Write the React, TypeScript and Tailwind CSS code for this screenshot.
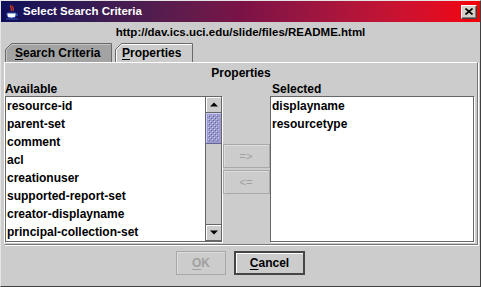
import React from "react";

const available = [
  "resource-id",
  "parent-set",
  "comment",
  "acl",
  "creationuser",
  "supported-report-set",
  "creator-displayname",
  "principal-collection-set",
];

const selected = ["displayname", "resourcetype"];

function JavaIcon() {
  return (
    <svg width="16" height="16" viewBox="0 0 16 16">
      <path d="M7 1c-2 2 2 3 0 6M9 2c-1.5 1.5 1.5 2.5 0 5" fill="none" stroke="#e04020" strokeWidth="1.2" />
      <path d="M3 9h9v2c0 2-2 3-4.5 3S3 13 3 11z" fill="#ffffff" stroke="#3050b0" strokeWidth="1" />
      <path d="M12 10h1.5v1.5H12" fill="none" stroke="#3050b0" strokeWidth="1" />
      <path d="M2 15h12" stroke="#3050b0" strokeWidth="1" />
    </svg>
  );
}

function CloseButton() {
  return (
    <div className="w-[16px] h-[14px] bg-[#d4d0c8] border-t border-l border-white border-r border-b border-r-[#404040] border-b-[#404040] shadow-[inset_-1px_-1px_0_#808080] flex items-center justify-center">
      <svg width="8" height="7" viewBox="0 0 8 7">
        <path d="M0.5 0.5l7 6M7.5 0.5l-7 6" stroke="#000" strokeWidth="1.6" />
      </svg>
    </div>
  );
}

function Tab({ label, selected: sel, width }: { label: string; selected?: boolean; width: number }) {
  return (
    <div className="relative h-[19px] flex items-center" style={{ width }}>
      <svg className="absolute inset-0" width={width} height="19">
        <path
          d={`M0.5 19 V6.5 L6.5 0.5 H${width - 1.5} V19`}
          fill={sel ? "#cccccc" : "#a3a3a3"}
          stroke="#6a6a6a"
          strokeWidth="1"
        />
        <path d={`M1.5 19 V6.9 L6.9 1.5 H${width - 2.5}`} fill="none" stroke={sel ? "#ffffff" : "#c4c4c4"} strokeWidth="1" />
      </svg>
      <span className={`relative text-[12px] font-bold text-black ${sel ? "pl-[7px]" : "pl-[10px]"}`}>
        <span className="underline underline-offset-2">{label[0]}</span>
        {label.slice(1)}
      </span>
    </div>
  );
}

function Arrow({ up }: { up?: boolean }) {
  return (
    <div className="w-[15px] h-[16px] bg-[#cccccc] border-b border-[#666666] shadow-[inset_1px_1px_0_#ffffff] flex items-center justify-center">
      <svg width="8" height="5" viewBox="0 0 8 5">
        <path d={up ? "M4 0.5L8 4.5H0z" : "M0 0.5h8L4 4.5z"} fill="#000" />
      </svg>
    </div>
  );
}

function ScrollBar() {
  return (
    <div className="w-[16px] h-full border-l border-[#666666] bg-[#cccccc] flex flex-col">
      <Arrow up />
      <div className="h-[31px] w-[15px] bg-[#9999cc] border-b border-[#666699] shadow-[inset_1px_1px_0_#ccccff]">
        <svg width="15" height="30">
          <defs>
            <pattern id="bumps" width="4" height="4" patternUnits="userSpaceOnUse">
              <rect x="0" y="0" width="1" height="1" fill="#ccccff" />
              <rect x="1" y="1" width="1" height="1" fill="#666699" />
              <rect x="2" y="2" width="1" height="1" fill="#ccccff" />
              <rect x="3" y="3" width="1" height="1" fill="#666699" />
            </pattern>
          </defs>
          <rect x="2" y="2" width="11" height="26" fill="url(#bumps)" />
        </svg>
      </div>
      <div className="flex-1" />
      <div className="border-t border-[#666666]">
        <Arrow />
      </div>
    </div>
  );
}

function ListBox({ items, scroll }: { items: string[]; scroll?: boolean }) {
  return (
    <div className="h-[146px] bg-white border border-[#666666] shadow-[1px_1px_0_#ffffff] flex">
      <div className="flex-1 flex flex-col pl-[1px]">
        {items.map((it) => (
          <div key={it} className="h-[18px] leading-[18px] text-[12px] font-bold text-black whitespace-nowrap">
            {it}
          </div>
        ))}
      </div>
      {scroll && <ScrollBar />}
    </div>
  );
}

function SmallButton({ label }: { label: string }) {
  return (
    <div className="w-[47px] h-[24px] border border-[#a8a8a8] shadow-[inset_1px_1px_0_#dddddd] flex items-center justify-center text-[11px] text-[#a0a0a0]">
      {label}
    </div>
  );
}

export default function App() {
  return (
    <div className="w-[481px] h-[287px] bg-[#cccccc] border-t border-l border-t-[#e4e4e4] border-l-[#e4e4e4] border-r border-b border-r-[#404040] border-b-[#404040] flex flex-col font-['Liberation_Sans',Arial,sans-serif] overflow-hidden">
      <div className="h-[21px] bg-linear-to-r from-[#0e0e58] via-[#7a1246] to-[#f50000] flex items-center pl-[3px] pr-[3px]">
        <JavaIcon />
        <span className="ml-[3px] text-white text-[11.5px] font-bold flex-1">Select Search Criteria</span>
        <CloseButton />
      </div>

      <div className="h-[21px] flex items-center justify-center text-[11.5px] font-bold text-black">
        http://dav.ics.uci.edu/slide/files/README.html
      </div>

      <div className="h-[19px] flex items-end pl-[4px] gap-[2px]">
        <Tab label="Search Criteria" width={108} />
        <Tab label="Properties" width={79} selected />
      </div>

      <div className="ml-[3px] w-[474px] h-[183px] border-t border-l border-white border-r border-b border-r-[#777777] border-b-[#777777] shadow-[1px_1px_0_#ffffff] flex flex-col">
        <div className="h-[19px] flex items-center justify-center text-[12px] font-bold text-black">Properties</div>
        <div className="flex">
          <div className="w-[217px] flex flex-col">
            <div className="h-[14px] leading-[14px] text-[12px] font-bold text-black">Available</div>
            <ListBox items={available} scroll />
          </div>
          <div className="w-[48px] pt-[14px] flex flex-col">
            <div className="h-[146px] flex flex-col justify-center items-center gap-[2px]">
              <SmallButton label="=>" />
              <SmallButton label="<=" />
            </div>
          </div>
          <div className="w-[204px] flex flex-col">
            <div className="h-[14px] leading-[14px] pl-[2px] text-[12px] font-bold text-black">Selected</div>
            <ListBox items={selected} />
          </div>
        </div>
      </div>

      <div className="flex justify-center gap-[8px] pt-[6px]">
        <div className="w-[50px] h-[24px] border border-[#a8a8a8] shadow-[inset_1px_1px_0_#dddddd] flex items-center justify-center text-[12px] font-bold text-[#a0a0a0]">
          <span className="underline underline-offset-2">O</span>K
        </div>
        <div className="w-[71px] h-[24px] border-2 border-[#454545] shadow-[inset_1px_1px_0_#ffffff] flex items-center justify-center text-[12px] font-bold text-black">
          <span className="underline underline-offset-2">C</span>ancel
        </div>
      </div>
    </div>
  );
}
